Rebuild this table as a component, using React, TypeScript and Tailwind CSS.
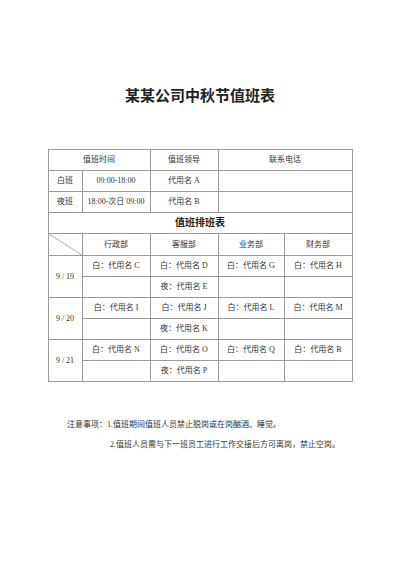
import React from "react";

const FONT = { fontFamily: '"Liberation Serif", "Noto Sans CJK SC", serif' };

const DAYS = [
  { date: "9 / 19", day: ["C", "D", "G", "H"], night: "E" },
  { date: "9 / 20", day: ["I", "J", "L", "M"], night: "K" },
  { date: "9 / 21", day: ["N", "O", "Q", "R"], night: "P" },
];

const cell = "border border-[#9a9a9a] h-[21px] p-0 text-center align-middle";

export default function App() {
  return (
    <div className="w-[400px] h-[565px] bg-white text-[#333]" style={FONT}>
      <h1 className="pt-[86px] h-[106px] text-center text-[15px] leading-[20px] font-bold text-[#222]">
        某某公司中秋节值班表
      </h1>

      <table className="mt-[43px] mx-auto w-[304px] table-fixed border-collapse text-[8px] leading-[10px]">
        <colgroup>
          <col className="w-[34px]" />
          <col className="w-[68px]" />
          <col className="w-[68px]" />
          <col className="w-[66px]" />
          <col className="w-[68px]" />
        </colgroup>
        <tbody>
          {/* top section */}
          <tr>
            <td className={cell} colSpan={2}>值班时间</td>
            <td className={cell}>值班领导</td>
            <td className={cell} colSpan={2}>联系电话</td>
          </tr>
          <tr>
            <td className={cell}>白班</td>
            <td className={cell}>09:00-18:00</td>
            <td className={cell}>代用名 A</td>
            <td className={cell} colSpan={2}></td>
          </tr>
          <tr>
            <td className={cell}>夜班</td>
            <td className={cell}>18:00-次日 09:00</td>
            <td className={cell}>代用名 B</td>
            <td className={cell} colSpan={2}></td>
          </tr>

          {/* schedule */}
          <tr>
            <td className={cell + " text-[10px] font-bold text-[#222]"} colSpan={5}>值班排班表</td>
          </tr>
          <tr>
            <td className={cell + " relative h-[22px]"}>
              <svg className="absolute inset-0 w-full h-full" viewBox="0 0 34 22" preserveAspectRatio="none">
                <line x1="0" y1="0" x2="34" y2="22" stroke="#9a9a9a" strokeWidth="0.8" />
              </svg>
            </td>
            <td className={cell + " h-[22px]"}>行政部</td>
            <td className={cell + " h-[22px]"}>客服部</td>
            <td className={cell + " h-[22px]"}>业务部</td>
            <td className={cell + " h-[22px]"}>财务部</td>
          </tr>
          {DAYS.map((d) => (
            <React.Fragment key={d.date}>
              <tr>
                <td className={cell} rowSpan={2}>{d.date}</td>
                {d.day.map((n) => (
                  <td key={n} className={cell}>白：代用名 {n}</td>
                ))}
              </tr>
              <tr>
                <td className={cell}></td>
                <td className={cell}>夜：代用名 {d.night}</td>
                <td className={cell}></td>
                <td className={cell}></td>
              </tr>
            </React.Fragment>
          ))}
        </tbody>
      </table>

      <div className="mt-[33px] text-[8px] leading-[20px]">
        <p className="pl-[67px]">注意事项：1.值班期间值班人员禁止脱岗或在岗酗酒、睡觉。</p>
        <p className="pl-[110px]">2.值班人员需与下一班员工进行工作交接后方可离岗，禁止空岗。</p>
      </div>
    </div>
  );
}
